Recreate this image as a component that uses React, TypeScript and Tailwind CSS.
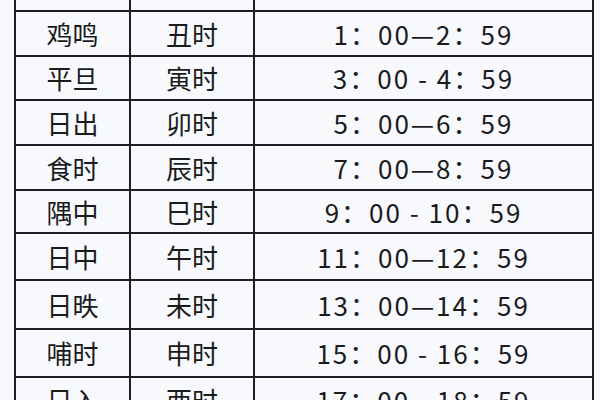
const rows = [
  { name: "鸡鸣", shi: "丑时", time: "1：00—2：59", h: "h-[45px]" },
  { name: "平旦", shi: "寅时", time: "3：00 - 4：59", h: "h-[44px]" },
  { name: "日出", shi: "卯时", time: "5：00—6：59", h: "h-[45px]" },
  { name: "食时", shi: "辰时", time: "7：00—8：59", h: "h-[45px]" },
  { name: "隅中", shi: "巳时", time: "9：00 - 10：59", h: "h-[43px]" },
  { name: "日中", shi: "午时", time: "11：00—12：59", h: "h-[47px]" },
  { name: "日昳", shi: "未时", time: "13：00—14：59", h: "h-[49px]" },
  { name: "哺时", shi: "申时", time: "15：00 - 16：59", h: "h-[48px]" },
  { name: "日入", shi: "酉时", time: "17：00 - 18：59", h: "h-[45px]" },
];

export default function App() {
  return (
    <div className="w-[600px] h-[400px] overflow-hidden bg-[#f8f9fd] pl-[14px] font-['Noto_Sans_CJK_SC','Noto_Sans',sans-serif] text-[#1b1b1b]">
      <table className="-mt-[50px] border-collapse text-[26px] leading-none">
        <colgroup>
          <col className="w-[115px]" />
          <col className="w-[124px]" />
          <col className="w-[339px]" />
        </colgroup>
        <tbody>
          {/* header row sits mostly above the crop */}
          <tr className="h-[60px]">
            <td className="border-2 border-[#1e1e1e] text-center align-top pt-1">时段</td>
            <td className="border-2 border-[#1e1e1e] text-center align-top pt-1">时辰</td>
            <td className="border-2 border-[#1e1e1e] text-center align-top pt-1">北京时间</td>
          </tr>
          {rows.map((r) => (
            <tr key={r.name} className={r.h}>
              <td className="border-2 border-[#1e1e1e] text-center">{r.name}</td>
              <td className="border-2 border-[#1e1e1e] text-center">{r.shi}</td>
              <td className="border-2 border-[#1e1e1e] text-center whitespace-nowrap tracking-[2px]">{r.time}</td>
            </tr>
          ))}
        </tbody>
      </table>
    </div>
  );
}
